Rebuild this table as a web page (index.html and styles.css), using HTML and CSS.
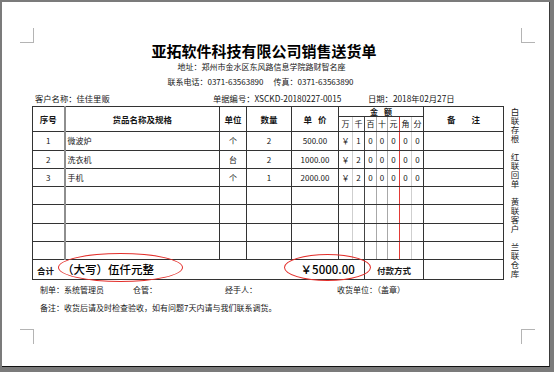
FILE: index.html
```html
<!DOCTYPE html>
<html lang="zh-CN">
<head>
<meta charset="utf-8">
<title>销售送货单</title>
<link rel="stylesheet" href="styles.css">
</head>
<body>
<div class="paper">
  <span class="mark tl"></span>
  <span class="mark tr"></span>
  <span class="mark bl"></span>
  <span class="mark br"></span>
  <div class="sheet">
    <h1 class="title">亚拓软件科技有限公司销售送货单</h1>
    <div class="addr">地址：郑州市金水区东风路信息学院路财智名座</div>
    <div class="phone"><span>联系电话：0371-63563890</span><span class="fax">传真：0371-63563890</span></div>
    <div class="cust">
      <span class="c-name">客户名称：佳佳里贩</span>
      <span class="c-no">单据编号：XSCKD-20180227-0015</span>
      <span>日期：2018年02月27日</span>
    </div>
    <div class="body">
      <table class="grid">
        <colgroup>
          <col style="width:32px"><col style="width:155px"><col style="width:27px"><col style="width:45px"><col style="width:47px">
          <col style="width:14px"><col style="width:12px"><col style="width:12px"><col style="width:11px"><col style="width:12px"><col style="width:12px"><col style="width:12px">
          <col style="width:80px">
        </colgroup>
        <tr class="h1">
          <td rowspan="2" class="hd">序号</td>
          <td rowspan="2" class="hd c2">货品名称及规格</td>
          <td rowspan="2" class="hd">单位</td>
          <td rowspan="2" class="hd">数量</td>
          <td rowspan="2" class="hd"><span class="sp">单</span>价</td>
          <td colspan="7" class="hd je"><span class="sp2">金</span>额</td>
          <td rowspan="2" class="hd"><span class="sp3">备</span>注</td>
        </tr>
        <tr class="h2">
          <td class="c6">万</td><td class="c7">千</td><td class="c8">百</td><td class="c9">十</td><td class="c10">元</td><td class="c11">角</td><td>分</td>
        </tr>
        <tr class="r19">
          <td>1</td><td class="c2 name">微波炉</td><td>个</td><td>2</td><td>500.00</td>
          <td class="c6">￥</td><td class="c7">1</td><td class="c8">0</td><td class="c9">0</td><td class="c10">0</td><td class="c11">0</td><td>0</td><td></td>
        </tr>
        <tr class="r18">
          <td>2</td><td class="c2 name">洗衣机</td><td>台</td><td>2</td><td>1000.00</td>
          <td class="c6">￥</td><td class="c7">2</td><td class="c8">0</td><td class="c9">0</td><td class="c10">0</td><td class="c11">0</td><td>0</td><td></td>
        </tr>
        <tr class="r18">
          <td>3</td><td class="c2 name">手机</td><td>个</td><td>1</td><td>2000.00</td>
          <td class="c6">￥</td><td class="c7">2</td><td class="c8">0</td><td class="c9">0</td><td class="c10">0</td><td class="c11">0</td><td>0</td><td></td>
        </tr>
        <tr class="r18">
          <td></td><td class="c2"></td><td></td><td></td><td></td>
          <td class="c6"></td><td class="c7"></td><td class="c8"></td><td class="c9"></td><td class="c10"></td><td class="c11"></td><td></td><td></td>
        </tr>
        <tr class="r19">
          <td></td><td class="c2"></td><td></td><td></td><td></td>
          <td class="c6"></td><td class="c7"></td><td class="c8"></td><td class="c9"></td><td class="c10"></td><td class="c11"></td><td></td><td></td>
        </tr>
        <tr class="r18">
          <td></td><td class="c2"></td><td></td><td></td><td></td>
          <td class="c6"></td><td class="c7"></td><td class="c8"></td><td class="c9"></td><td class="c10"></td><td class="c11"></td><td></td><td></td>
        </tr>
        <tr class="r18">
          <td></td><td class="c2"></td><td></td><td></td><td></td>
          <td class="c6"></td><td class="c7"></td><td class="c8"></td><td class="c9"></td><td class="c10"></td><td class="c11"></td><td></td><td></td>
        </tr>
        <tr class="sum">
          <td colspan="4" class="sum-a"><b>合计</b><span class="big">（大写）伍仟元整</span><span class="ring ring-a"></span></td>
          <td colspan="3" class="sum-b"><span class="big">￥5000.00</span><span class="ring ring-b"></span></td>
          <td colspan="5" class="hd">付款方式</td>
          <td></td>
        </tr>
      </table>
      <div class="side">
        <span>白联存根</span>
        <span>红联回单</span>
        <span>黄联客户</span>
        <span>兰联仓库</span>
      </div>
    </div>
    <div class="foot1">
      <span class="f-a">制单：系统管理员</span>
      <span class="f-b">仓管：</span>
      <span class="f-c">经手人：</span>
      <span>收货单位：（盖章）</span>
    </div>
    <div class="foot2">备注：收货后请及时检查验收，如有问题7天内请与我们联系调货。</div>
  </div>
</div>
</body>
</html>
```

FILE: styles.css
```css
* { box-sizing: border-box; }

body {
  margin: 0;
  background: #7b7b7b;
  font-family: "Noto Sans CJK SC", "Noto Sans", sans-serif;
  color: #161616;
}

.paper {
  position: relative;
  margin: 2px 0 0 2px;
  width: 548px;
  height: 365px;
  background: #fff;
  border-right: 1px solid #3a3a3a;
  border-bottom: 1px solid #111;
}

.mark {
  position: absolute;
  width: 14px;
  height: 15px;
  border: 0 solid #b4b4b4;
}
.mark.tl { left: 18px; top: 26px; border-right-width: 1px; border-bottom-width: 1px; }
.mark.tr { left: 519px; top: 26px; border-left-width: 1px; border-bottom-width: 1px; }
.mark.bl { left: 18px; top: 327px; border-right-width: 1px; border-top-width: 1px; }
.mark.br { left: 519px; top: 327px; border-left-width: 1px; border-top-width: 1px; }

.sheet {
  margin-left: 30px;
  padding-top: 41px;
  width: 492px;
}

.title {
  margin: 0;
  width: 464px;
  height: 16px;
  font-size: 15px;
  line-height: 16px;
  font-weight: 700;
  text-align: center;
  color: #000;
}

.addr {
  margin-top: 2px;
  width: 459px;
  font-size: 8px;
  line-height: 12px;
  text-align: center;
}

.phone {
  margin-top: 3px;
  width: 457px;
  font-size: 8px;
  line-height: 12px;
  text-align: center;
}
.fax { margin-left: 10px; }

.cust {
  margin-top: 4px;
  display: flex;
  padding-left: 3px;
  font-size: 8.3px;
  line-height: 12px;
}
.c-name { width: 178px; }
.c-no { width: 155px; }

.body {
  margin-top: 2px;
  display: flex;
  align-items: flex-start;
}

.grid {
  width: 471px;
  table-layout: fixed;
  border-collapse: collapse;
  border: 1px solid #222;
  font-size: 8px;
}
.grid td {
  border: 1px solid #333;
  padding: 0;
  text-align: center;
  line-height: 10px;
  white-space: nowrap;
  overflow: visible;
}
.grid .hd { font-weight: 700; font-size: 8.5px; }
.grid .c2 { border-left: 2px solid #8e8e8e; }
.grid .name { text-align: left; padding-left: 2px; }
.grid .je { font-size: 8px; line-height: 9px; }

.h1 { height: 10px; }
.h2 { height: 15px; }
.r18 { height: 18px; }
.r19 { height: 19px; }
.sum { height: 20px; }

.sp { margin-right: 6px; }
.sp2 { margin-right: 6px; }
.sp3 { margin-right: 16px; }

.grid .c6 { border-right: 1px solid #cfcfcf; }
.grid .c7 { border-right: 1px solid #444; }
.grid .c8 { border-right: 1px solid #a8a8a8; }
.grid .c9 { border-right: 1px solid #a8a8a8; }
.grid .c10 { border-right: 1px solid #e23a36; }
.grid .c11 { border-right: 1px solid #cfcfcf; }

.sum-a, .sum-b { position: relative; }
.grid .sum-a {
  text-align: left;
  padding-left: 4px;
  border-right: hidden;
  font-size: 8.5px;
}
.big { font-size: 11.5px; font-weight: 500; color: #000; }
.sum-a .big { margin-left: 8px; }

.ring {
  position: absolute;
  border: 1.5px solid #e3302c;
  border-radius: 50%;
}
.ring-a { left: 25px; top: -7px; width: 125px; height: 29px; }
.ring-b { left: -8px; top: -6px; width: 87px; height: 27px; }

.side {
  margin-left: 6px;
  padding-top: 2px;
  display: flex;
  flex-direction: column;
  gap: 9px;
}
.side span {
  writing-mode: vertical-rl;
  text-orientation: upright;
  font-size: 8.5px;
  line-height: 9px;
  letter-spacing: 0.5px;
  color: #222;
}

.foot1 {
  margin-top: 4px;
  padding-left: 8px;
  display: flex;
  font-size: 8px;
  line-height: 12px;
}
.f-a { width: 93px; }
.f-b { width: 92px; }
.f-c { width: 112px; }

.foot2 {
  margin-top: 6px;
  padding-left: 8px;
  font-size: 8px;
  line-height: 12px;
}
```
